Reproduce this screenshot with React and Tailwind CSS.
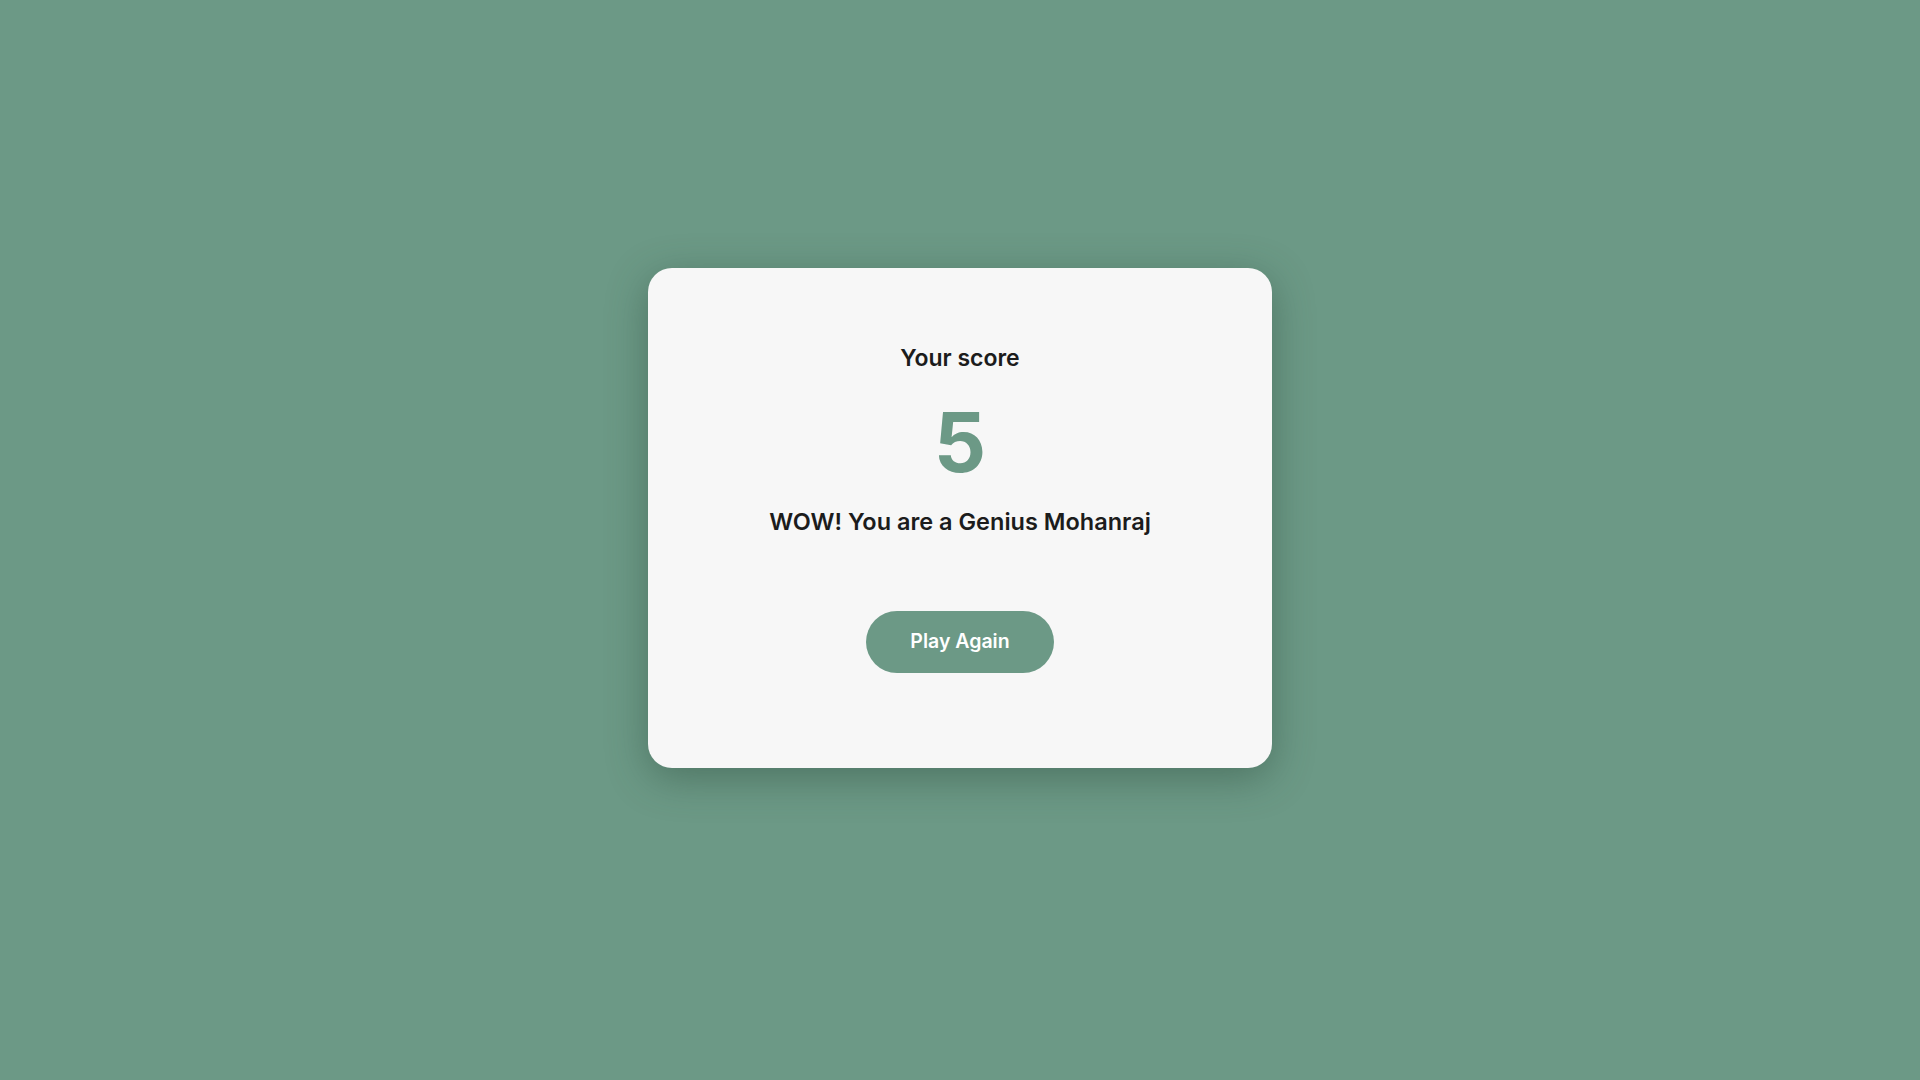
export default function App() {
  const score = 5;
  const name = "Mohanraj";

  return (
    <div className="min-h-screen bg-[#6c9986] flex justify-center pt-[268px] font-['Inter','Lato',sans-serif]">
      <div className="w-[624px] h-[500px] bg-[#f7f7f7] rounded-[24px] shadow-[0_10px_40px_rgba(40,70,55,0.45)] flex flex-col items-center pt-[74px]">
        <h2 className="text-[23px] leading-[32px] font-semibold text-[#1c1c1c]">Your score</h2>
        <p className="mt-[25px] text-[82px] leading-[88px] font-bold text-[#6c9986]">{score}</p>
        <p className="mt-[19px] text-[23.5px] leading-[32px] font-semibold text-[#1c1c1c]">
          WOW! You are a Genius {name}
        </p>
        <button className="mt-[73px] w-[188px] h-[62px] rounded-full bg-[#6c9986] text-white text-[19.5px] font-semibold">
          Play Again
        </button>
      </div>
    </div>
  );
}
